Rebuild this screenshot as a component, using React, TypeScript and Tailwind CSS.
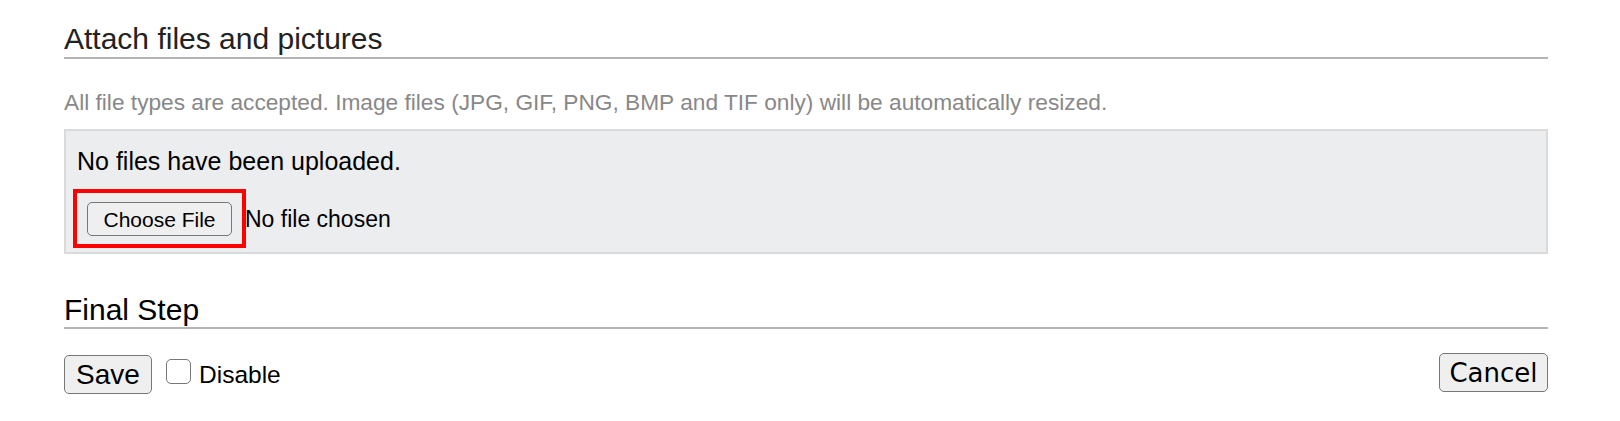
import React from "react";

export default function App() {
  return (
    <div className="w-[1620px] h-[421px] bg-white overflow-hidden" style={{ fontFamily: '"Liberation Sans", Arial, sans-serif' }}>
      <div className="ml-[64px] w-[1484px] pt-[22px]">
        <h2 className="text-[30px] leading-[34px] text-[#222] pb-[1px] border-b-2 border-[#b4b4b4]">
          Attach files and pictures
        </h2>
        <p className="mt-[30px] text-[22.7px] leading-[26px] text-[#888]">
          All file types are accepted. Image files (JPG, GIF, PNG, BMP and TIF only) will be automatically resized.
        </p>
        <div className="mt-[14px] h-[125px] border-2 border-[#dadada] bg-[#ecedef] pl-[11px] pt-[16px]">
          <div className="text-[25px] leading-[29px] text-black">No files have been uploaded.</div>
          <div className="mt-[26px] ml-[10px] flex items-center">
            <div className="relative">
              <button className="h-[34px] w-[145px] rounded-[5px] border-[1.5px] border-[#777] bg-[#efefef] text-[21px] text-black leading-none">
                Choose File
              </button>
              <div className="absolute left-[-14px] right-[-14px] top-[-13px] bottom-[-12px] border-4 border-[#ff0000]" />
            </div>
            <span className="ml-[13px] text-[23px] leading-[26px] text-black">No file chosen</span>
          </div>
        </div>
        <h2 className="mt-[39px] text-[30px] leading-[34px] text-black border-b-2 border-[#b4b4b4]">
          Final Step
        </h2>
        <div className="mt-[24px] flex items-start justify-between">
          <div className="flex items-start mt-[2px]">
            <button className="h-[39px] w-[88px] rounded-[5px] border-[1.5px] border-[#777] bg-[#efefef] text-[28px] leading-none text-black">
              Save
            </button>
            <span className="ml-[14px] mt-[4px] w-[25px] h-[25px] rounded-[5px] border-[1.5px] border-[#777] bg-white" />
            <span className="ml-[8px] mt-[6px] text-[24.5px] leading-[28px] text-black">Disable</span>
          </div>
          <button
            className="h-[39px] w-[109px] rounded-[5px] border-[1.5px] border-[#777] bg-[#efefef] text-[26px] leading-none text-black"
            style={{ fontFamily: '"DejaVu Sans", Verdana, sans-serif' }}
          >
            Cancel
          </button>
        </div>
      </div>
    </div>
  );
}
